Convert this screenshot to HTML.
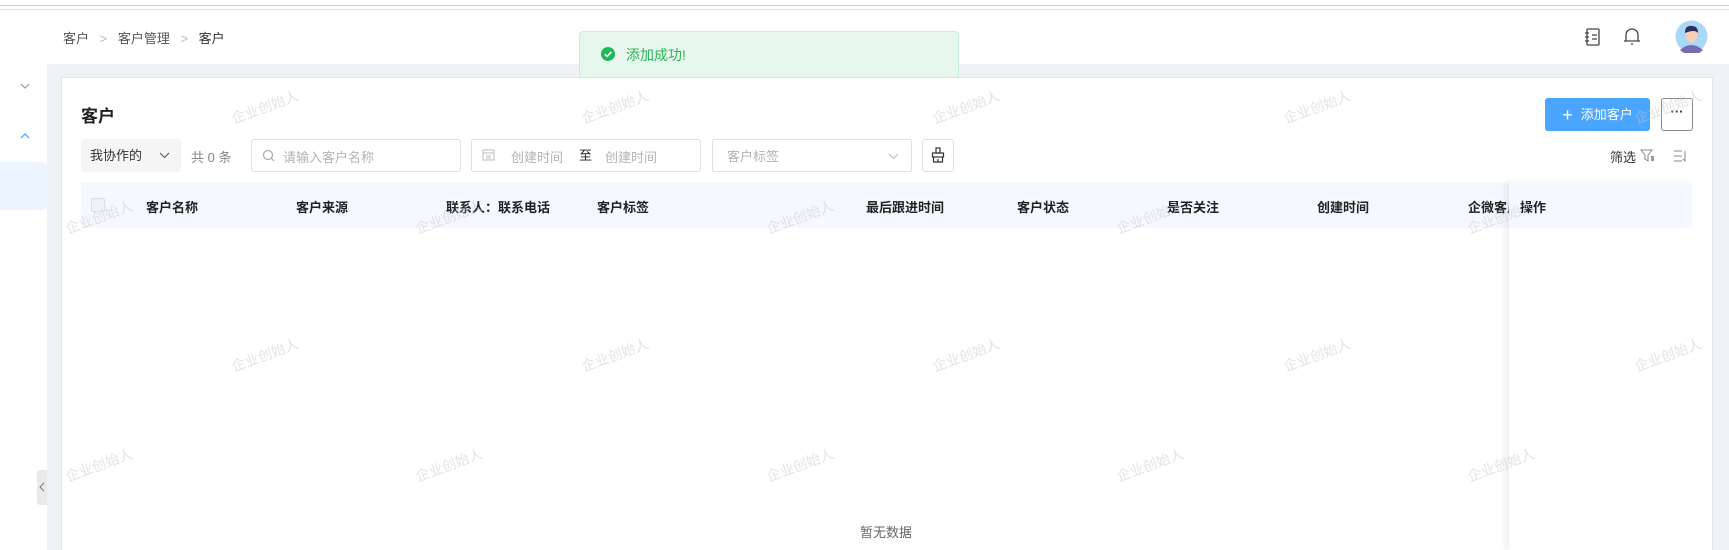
<!DOCTYPE html>
<html style="overflow:hidden;height:550px"><head><meta charset="utf-8"><style>
*{margin:0;padding:0;box-sizing:border-box}
body{width:1729px;height:550px;overflow:hidden;background:#fff;font-family:"Liberation Sans","Noto Sans CJK SC",sans-serif;font-size:13px;color:#333;position:relative}
.a{position:absolute}
.wm{position:absolute;color:rgba(200,200,200,0.5);font-size:14px;transform:rotate(-20deg);white-space:nowrap}
.th{position:absolute;top:197px;font-weight:bold;font-size:13px;color:#222}
.inp{position:absolute;top:139px;height:33px;border:1px solid #dcdfe6;border-radius:3px;background:#fff}
.ph{color:#b0b3b8}
</style></head><body>
<div class="a" style="left:0;top:0;width:1729px;height:6px;border-bottom:1px solid #d0d0d0;background:#fff"></div>
<div class="a" style="left:0;top:9px;width:1729px;height:1px;background:#e0e0e0"></div>
<div class="a" style="left:0;top:10px;width:47px;height:540px;background:#fff"></div>
<svg class="a" style="left:20px;top:132px" width="10" height="7"><path d="M1 6 L5 2 L9 6" fill="none" stroke="#409eff" stroke-width="1.2"/></svg>
<svg class="a" style="left:20px;top:83px" width="10" height="7"><path d="M1 1 L5 5 L9 1" fill="none" stroke="#999" stroke-width="1.2"/></svg>
<div class="a" style="left:0;top:162px;width:47px;height:48px;background:#ecf5ff;border-radius:0 4px 4px 0"></div>
<div class="a" style="left:47px;top:10px;width:1682px;height:540px;background:#f0f2f5"></div>
<div class="a" style="left:37px;top:470px;width:10px;height:35px;background:#eaeaea;border-radius:3px 0 0 3px"></div>
<svg class="a" style="left:39px;top:482px" width="6" height="10"><path d="M5 1 L1 5 L5 9" fill="none" stroke="#777" stroke-width="1"/></svg>
<div class="a" style="left:47px;top:10px;width:1682px;height:54px;background:#fff"></div>
<div class="a" style="left:63px;top:28px;font-size:13px;color:#555">客户 <span style="color:#bbb;margin:0 7px">&gt;</span> 客户管理 <span style="color:#bbb;margin:0 7px">&gt;</span> <span style="color:#333">客户</span></div>
<svg class="a" style="left:1584px;top:27px" width="18" height="20"><rect x="3" y="2" width="12" height="16" rx="1" fill="none" stroke="#444" stroke-width="1.3"/><path d="M1 6h4M1 10h4M1 14h4M8 8h5M8 12h5" stroke="#444" stroke-width="1.2"/></svg>
<svg class="a" style="left:1622px;top:26px" width="20" height="21"><path d="M4 15 V9 a6 6 0 0 1 12 0 V15 M2 15 H18" fill="none" stroke="#444" stroke-width="1.3"/><path d="M9 18 h2" stroke="#444" stroke-width="1.3"/></svg>
<svg class="a" style="left:1675px;top:20px" width="33" height="33"><circle cx="16.5" cy="16.5" r="16" fill="#a9d8f8"/><path d="M5 30 Q16 20 28 30 A16 16 0 0 1 5 30Z" fill="#7a6bb0"/><ellipse cx="16.5" cy="15" rx="6" ry="7.5" fill="#f4cfb8"/><path d="M10 13 Q10 5 17 6 Q23 6 23 13 Q20 9 10 13Z" fill="#2b2f5a"/></svg>
<div class="a" style="left:61px;top:77px;width:1652px;height:473px;background:#fff;border:1px solid #e6e8ee;border-bottom:none"></div>
<div class="a" style="left:81px;top:102px;font-size:17px;font-weight:bold;color:#222">客户</div>
<div class="a" style="left:1545px;top:98px;width:105px;height:33px;background:#4aa5ff;border-radius:3px;color:#fff;font-size:13px;line-height:33px;text-align:center"><span style="font-size:18px;vertical-align:-2px;margin-right:8px">+</span>添加客户</div>
<div class="a" style="left:1661px;top:98px;width:32px;height:33px;border:1px solid #888;border-radius:3px;text-align:center;line-height:26px;font-weight:bold;color:#333">···</div>
<div class="a" style="left:81px;top:139px;width:100px;height:33px;background:#f5f5f5;border-radius:3px;line-height:33px;padding-left:9px;color:#333">我协作的</div>
<svg class="a" style="left:159px;top:152px" width="11" height="7"><path d="M1 1 L5.5 5.5 L10 1" fill="none" stroke="#555" stroke-width="1.1"/></svg>
<div class="a" style="left:191px;top:147px;color:#888">共 0 条</div>
<div class="inp" style="left:251px;width:210px"></div>
<svg class="a" style="left:262px;top:149px" width="13" height="13"><circle cx="6" cy="6" r="4.5" fill="none" stroke="#aaa" stroke-width="1.2"/><path d="M9.5 9.5 L12 12" stroke="#aaa" stroke-width="1.2"/></svg>
<div class="a ph" style="left:283px;top:147px">请输入客户名称</div>
<div class="inp" style="left:471px;width:230px"></div>
<svg class="a" style="left:482px;top:148px" width="13" height="13"><rect x="1" y="2" width="11" height="10" fill="none" stroke="#bbb"/><path d="M1 5h11M4 8h5M4 10h5" stroke="#bbb"/></svg>
<div class="a ph" style="left:511px;top:147px">创建时间</div>
<div class="a" style="left:579px;top:145px;color:#222">至</div>
<div class="a ph" style="left:605px;top:147px">创建时间</div>
<div class="inp" style="left:712px;width:200px"></div>
<div class="a ph" style="left:727px;top:146px">客户标签</div>
<svg class="a" style="left:888px;top:153px" width="11" height="7"><path d="M1 1 L5.5 5.5 L10 1" fill="none" stroke="#bbb" stroke-width="1"/></svg>
<div class="inp" style="left:922px;width:32px"></div>
<svg class="a" style="left:931px;top:147px" width="14" height="16"><rect x="5" y="1" width="4" height="5" fill="none" stroke="#333" stroke-width="1.2"/><rect x="1.5" y="6" width="11" height="4" fill="none" stroke="#333" stroke-width="1.2"/><path d="M2.5 10 V15 H11.5 V10 M7 12v3" fill="none" stroke="#333" stroke-width="1.2"/></svg>
<div class="a" style="left:1610px;top:147px;color:#333">筛选</div>
<svg class="a" style="left:1640px;top:149px" width="16" height="13"><path d="M1 1 H12 L8 6 V12 L5 10 V6 Z" fill="none" stroke="#888" stroke-width="1"/><rect x="11" y="7" width="3" height="5" fill="#999"/></svg>
<svg class="a" style="left:1673px;top:150px" width="14" height="12"><path d="M1 1h8M1 6h8M1 11h8M12 1v10l-2-2" fill="none" stroke="#888" stroke-width="1"/></svg>
<div class="a" style="left:81px;top:182px;width:1611px;height:46px;background:#f5f9ff"></div>
<div class="a" style="left:91px;top:198px;width:14px;height:14px;border:1px solid #dcdfe6;background:#eef1f7;border-radius:2px"></div>
<div class="th" style="left:146px">客户名称</div>
<div class="th" style="left:296px">客户来源</div>
<div class="th" style="left:446px">联系人：联系电话</div>
<div class="th" style="left:597px">客户标签</div>
<div class="th" style="left:866px">最后跟进时间</div>
<div class="th" style="left:1017px">客户状态</div>
<div class="th" style="left:1167px">是否关注</div>
<div class="th" style="left:1317px">创建时间</div>
<div class="th" style="left:1468px;width:43px;overflow:hidden;white-space:nowrap">企微客户</div>
<div class="a" style="left:1509px;top:182px;width:183px;height:368px;background:#fff;box-shadow:-4px 0 6px rgba(0,0,0,0.06)"></div>
<div class="a" style="left:1509px;top:182px;width:183px;height:46px;background:#f5f9ff"></div>
<div class="th" style="left:1520px">操作</div>
<div class="a" style="left:860px;top:522px;color:#666;font-size:13px">暂无数据</div>
<div class="wm" style="left:230px;top:97px">企业创始人</div><div class="wm" style="left:580px;top:97px">企业创始人</div><div class="wm" style="left:931px;top:97px">企业创始人</div><div class="wm" style="left:1282px;top:97px">企业创始人</div><div class="wm" style="left:1633px;top:97px">企业创始人</div>
<div class="wm" style="left:64px;top:207px">企业创始人</div><div class="wm" style="left:414px;top:207px">企业创始人</div><div class="wm" style="left:765px;top:207px">企业创始人</div><div class="wm" style="left:1115px;top:207px">企业创始人</div><div class="wm" style="left:1466px;top:207px">企业创始人</div>
<div class="wm" style="left:230px;top:345px">企业创始人</div><div class="wm" style="left:580px;top:345px">企业创始人</div><div class="wm" style="left:931px;top:345px">企业创始人</div><div class="wm" style="left:1282px;top:345px">企业创始人</div><div class="wm" style="left:1633px;top:345px">企业创始人</div>
<div class="wm" style="left:64px;top:455px">企业创始人</div><div class="wm" style="left:414px;top:455px">企业创始人</div><div class="wm" style="left:765px;top:455px">企业创始人</div><div class="wm" style="left:1115px;top:455px">企业创始人</div><div class="wm" style="left:1466px;top:455px">企业创始人</div>
<div class="a" style="left:579px;top:31px;width:380px;height:47px;background:#e8f7ee;border:1px solid #c5eed5;border-radius:4px"></div>
<svg class="a" style="left:601px;top:47px" width="14" height="14"><circle cx="7" cy="7" r="7" fill="#1fb85a"/><path d="M3.8 7.2 L6.2 9.5 L10.3 4.8" fill="none" stroke="#fff" stroke-width="1.6"/></svg>
<div class="a" style="left:626px;top:45px;color:#2bb55a;font-size:14px">添加成功!</div>
</body></html>
